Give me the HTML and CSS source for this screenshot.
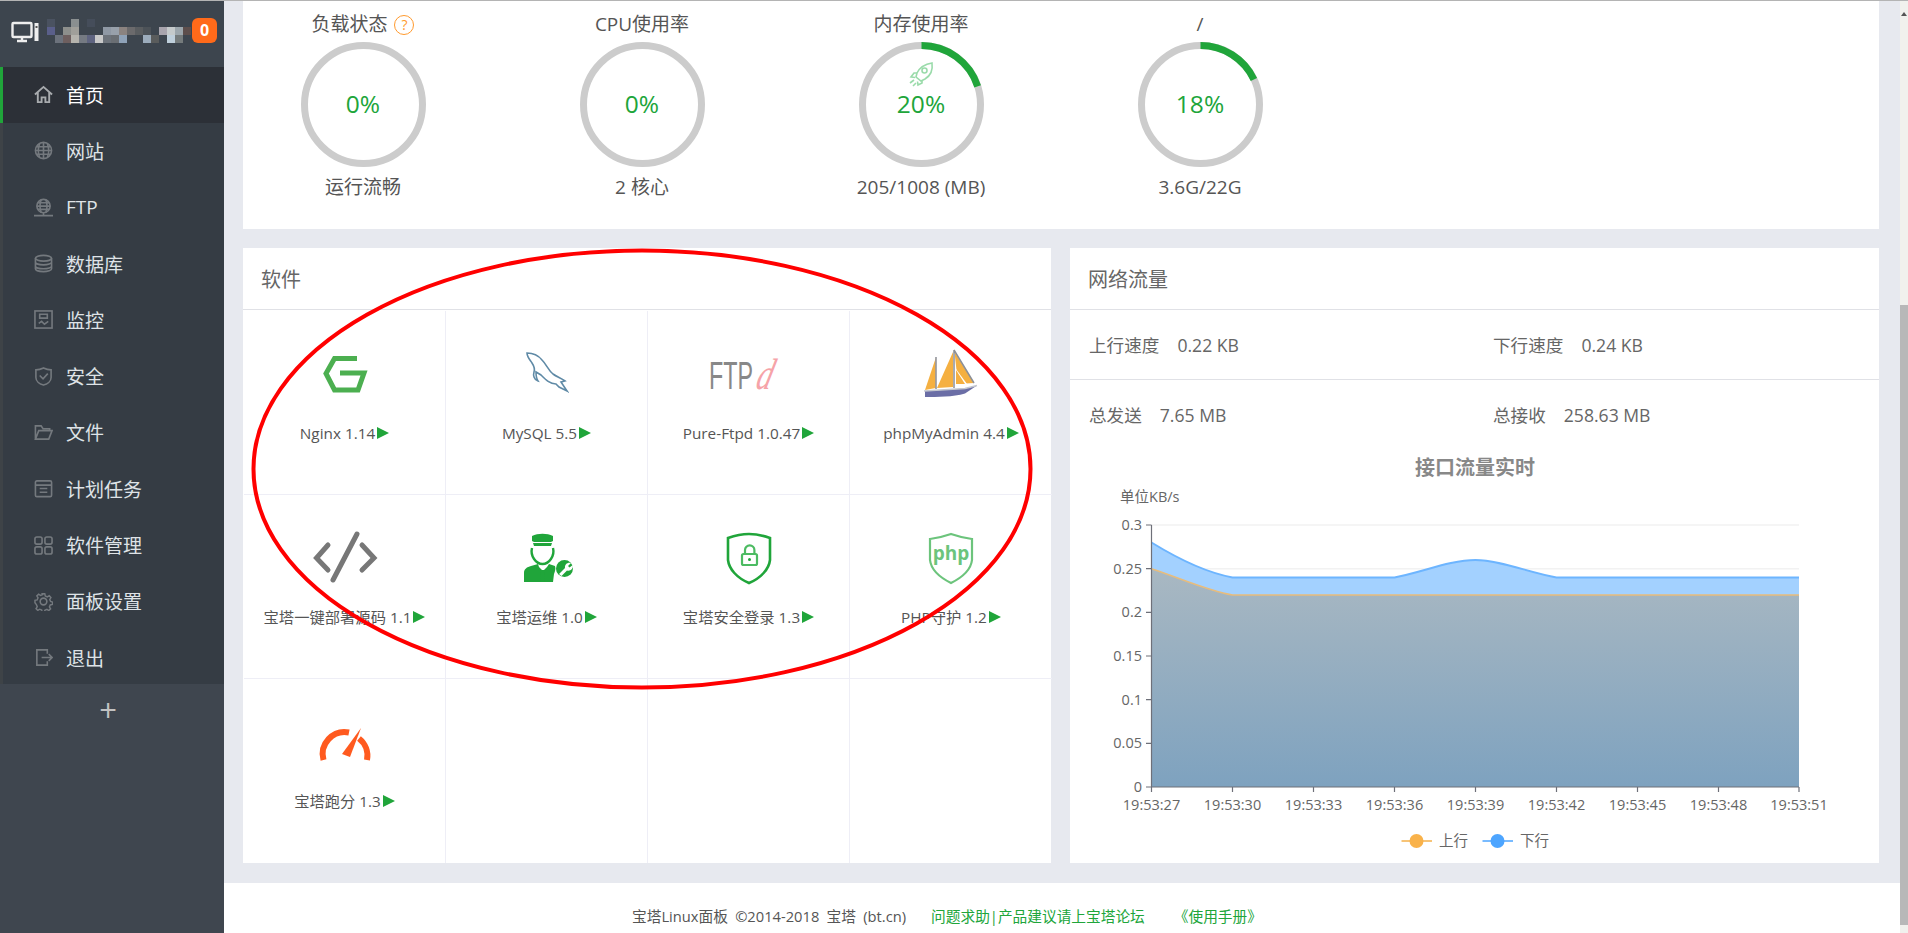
FILE: index.html
```html
<!DOCTYPE html>
<html lang="zh-CN">
<head>
<meta charset="utf-8">
<title>宝塔Linux面板</title>
<link rel="stylesheet" href="styles.css">
</head>
<body>
<div class="page">
  <aside class="sidebar">
    <div class="brand">
      <svg class="brand-icon" viewBox="0 0 30 24" width="30" height="24">
        <rect x="1.500" y="3" width="19" height="14" rx="1" fill="none" stroke="#eee" stroke-width="2.400"/>
        <path d="M6 21h10M11 17v4" stroke="#eee" stroke-width="2.400"/>
        <rect x="23.500" y="3" width="4" height="18" fill="#eee"/>
        <rect x="24.500" y="6" width="2" height="2" fill="#555"/>
      </svg>
      <svg class="mosaic" viewBox="47 17 144 24" width="144" height="24">
        <rect x="47" y="17" width="8" height="8" fill="#4a5260"/><rect x="71" y="17" width="8" height="8" fill="#8a8f90"/><rect x="87" y="17" width="8" height="8" fill="#454d5a"/>
        <rect x="47" y="25" width="8" height="8" fill="#5a5f8a"/><rect x="63" y="25" width="8" height="8" fill="#8d8f8c"/><rect x="71" y="25" width="8" height="8" fill="#a09f9a"/><rect x="103" y="25" width="8" height="8" fill="#8f98a4"/><rect x="111" y="25" width="8" height="8" fill="#98a0aa"/><rect x="119" y="25" width="8" height="8" fill="#8b8380"/><rect x="127" y="25" width="8" height="8" fill="#6b6a6c"/><rect x="135" y="25" width="8" height="8" fill="#5a5d60"/><rect x="143" y="25" width="8" height="8" fill="#4c5258"/><rect x="159" y="25" width="8" height="8" fill="#a8a4ad"/><rect x="167" y="25" width="8" height="8" fill="#c5cacb"/><rect x="175" y="25" width="8" height="8" fill="#9ca6ac"/><rect x="183" y="25" width="8" height="8" fill="#5d4e4c"/>
        <rect x="55" y="33" width="8" height="8" fill="#6c727c"/><rect x="63" y="33" width="8" height="8" fill="#6e5f5f"/><rect x="71" y="33" width="8" height="8" fill="#b5b3ad"/><rect x="79" y="33" width="8" height="8" fill="#757a82"/><rect x="87" y="33" width="8" height="8" fill="#5f6480"/><rect x="95" y="33" width="8" height="8" fill="#c9c9c9"/><rect x="103" y="33" width="8" height="8" fill="#6d737b"/><rect x="111" y="33" width="8" height="8" fill="#6a6e73"/><rect x="119" y="33" width="8" height="8" fill="#8fa2b8"/><rect x="143" y="33" width="8" height="8" fill="#9cacbc"/><rect x="151" y="33" width="8" height="8" fill="#5a5c5c"/><rect x="167" y="33" width="8" height="8" fill="#bfcfdb"/><rect x="175" y="33" width="8" height="8" fill="#757b7c"/>
      </svg>
      <span class="badge">0</span>
    </div>
    <nav class="menu">
      <a class="menu-item active"><svg class="mi" viewBox="0 0 20 20"><path d="M1 10 10 2l9 8M4 8v10h4v-5h4v5h4V8"/></svg>首页</a>
      <a class="menu-item"><svg class="mi" viewBox="0 0 20 20"><circle cx="10" cy="10" r="8.500"/><path d="M1.500 10h17M3 6h14M3 14h14M10 1.500v17M6 2.500c-2 5-2 10 0 15M14 2.500c2 5 2 10 0 15"/></svg>网站</a>
      <a class="menu-item"><svg class="mi" viewBox="0 0 20 20"><circle cx="10" cy="8.500" r="7"/><path d="M3 8.500h14M4 12h12M4 5h12M7.500 1.800c-1.500 4-1.500 9 0 13.400M12.500 1.800c1.500 4 1.500 9 0 13.400M10 15.500V18M0 18.500h20"/></svg>FTP</a>
      <a class="menu-item"><svg class="mi" viewBox="0 0 20 20"><ellipse cx="10" cy="4.500" rx="8.500" ry="3"/><path d="M1.500 4.500v11c0 1.700 3.800 3 8.500 3s8.500-1.300 8.500-3v-11M1.500 8.500c0 1.700 3.800 3 8.500 3s8.500-1.300 8.500-3M1.500 12.500c0 1.700 3.800 3 8.500 3s8.500-1.300 8.500-3"/></svg>数据库</a>
      <a class="menu-item"><svg class="mi" viewBox="0 0 20 20"><rect x="1" y="1" width="18" height="18"/><path d="M6 4.500h8v4H6zM5 14l3-2 3 3 4-3"/></svg>监控</a>
      <a class="menu-item"><svg class="mi" viewBox="0 0 20 20"><path d="M10 1c3 1.500 5 2 8 2v8c0 4-4 7-8 8-4-1-8-4-8-8V3c3 0 5-.5 8-2zM6 9l3.500 3.500L14.500 7"/></svg>安全</a>
      <a class="menu-item"><svg class="mi" viewBox="0 0 20 20"><path d="M1.500 17V3h6l2 3h7v2M1.500 17h14l3.500-9H5z"/></svg>文件</a>
      <a class="menu-item"><svg class="mi" viewBox="0 0 20 20"><rect x="1.500" y="2" width="17" height="16.500" rx="1.500"/><path d="M1.500 6.500h17M6 10h8M6 14h8"/></svg>计划任务</a>
      <a class="menu-item"><svg class="mi" viewBox="0 0 20 20"><rect x="1" y="1" width="7.500" height="7.500" rx="2"/><rect x="11.500" y="1" width="7.500" height="7.500" rx="2"/><rect x="1" y="11.500" width="7.500" height="7.500" rx="2"/><rect x="11.500" y="11.500" width="7.500" height="7.500" rx="2"/></svg>软件管理</a>
      <a class="menu-item"><svg class="mi" viewBox="0 0 20 20"><path d="M8.500 1h3l.6 2.600 2.300 1 2.300-1.400 2 2.200-1.400 2.200 1 2.400 2.200.6v2.800l-2.600.6-1 2.300 1.400 2.300-2.100 2-2.200-1.400-2.400 1-.6 2.400H8.500l-.6-2.600-2.300-1-2.300 1.400-2-2.100 1.400-2.200-1-2.400L0 11.500V8.700l2.600-.6 1-2.300-1.400-2.300 2.100-2 2.200 1.400 2.400-1z" transform="translate(1 1) scale(.9)"/><circle cx="10" cy="10" r="3.500"/></svg>面板设置</a>
      <a class="menu-item"><svg class="mi" viewBox="0 0 20 20"><path d="M14 6V2H3v16h11v-4M8 10h11M15.500 6.500 19 10l-3.500 3.500"/></svg>退出</a>
    </nav>
    <div class="plus">+</div>
  </aside>

  <main class="main">
    <section class="card status">
      <div class="gauge">
        <div class="gauge-title">负载状态 <span class="help">?</span></div>
        <div class="ring">
          <svg viewBox="0 0 125 125" width="125" height="125"><circle class="track" cx="62.500" cy="62.500" r="59"/></svg>
          <span class="pct">0%</span>
        </div>
        <div class="gauge-sub">运行流畅</div>
      </div>
      <div class="gauge">
        <div class="gauge-title">CPU使用率</div>
        <div class="ring">
          <svg viewBox="0 0 125 125" width="125" height="125"><circle class="track" cx="62.500" cy="62.500" r="59"/></svg>
          <span class="pct">0%</span>
        </div>
        <div class="gauge-sub">2 核心</div>
      </div>
      <div class="gauge">
        <div class="gauge-title">内存使用率</div>
        <div class="ring">
          <svg viewBox="0 0 125 125" width="125" height="125">
            <circle class="track" cx="62.500" cy="62.500" r="59"/>
            <circle class="arc" cx="62.500" cy="62.500" r="59" pathLength="100" stroke-dasharray="20 80" transform="rotate(-90 62.500 62.500)"/>
            <g class="rocket"><path d="M73 21c-7 1-12 4-15 10l-1 4 5 4 4-2c5-3 8-9 7-16z"/><circle cx="65.500" cy="28.500" r="2.500"/><path d="M58 31h-3l-3 4 4 .5M63 38v3l-4 2-.5-3.500M51 41l4-3M54 44l3-3"/></g>
          </svg>
          <span class="pct">20%</span>
        </div>
        <div class="gauge-sub">205/1008 (MB)</div>
      </div>
      <div class="gauge">
        <div class="gauge-title">/</div>
        <div class="ring">
          <svg viewBox="0 0 125 125" width="125" height="125">
            <circle class="track" cx="62.500" cy="62.500" r="59"/>
            <circle class="arc" cx="62.500" cy="62.500" r="59" pathLength="100" stroke-dasharray="18 82" transform="rotate(-90 62.500 62.500)"/>
          </svg>
          <span class="pct">18%</span>
        </div>
        <div class="gauge-sub">3.6G/22G</div>
      </div>
    </section>

    <div class="columns">
      <section class="card software">
        <h2 class="card-title">软件</h2>
        <div class="soft-grid">
          <div class="soft-cell">
            <svg class="soft-icon" viewBox="0 0 60 60"><path d="M42 15.500H19.500L11 30.500 19.500 47H43l6-17H25" fill="none" stroke="#4caf50" stroke-width="5"/></svg>
            <div class="soft-name">Nginx 1.14<i class="play"></i></div>
          </div>
          <div class="soft-cell">
            <svg class="soft-icon" viewBox="0 0 60 60"><path d="M10 10c5 0 11 2 15 7 5 5 6 10 11 14 4 3 8 4 12 7l-4 1 6 9-8-4-3-3c-6 0-10-4-15-9l-5-3c0 3 0 6 2 9-4-1-5-6-4-9 1-3 0-6-2-9-2-3-5-6-5-10z" fill="none" stroke="#5f8aa6" stroke-width="1.600"/></svg>
            <div class="soft-name">MySQL 5.5<i class="play"></i></div>
          </div>
          <div class="soft-cell">
            <svg class="soft-icon wide" viewBox="0 0 80 60"><text class="ftp-t" x="3" y="46" textLength="44" lengthAdjust="spacingAndGlyphs">FTP</text><text class="ftp-d" transform="translate(48.500 46) skewX(-15) scale(.7 1)">d</text></svg>
            <div class="soft-name">Pure-Ftpd 1.0.47<i class="play"></i></div>
          </div>
          <div class="soft-cell">
            <svg class="soft-icon" viewBox="0 0 60 60">
              <path fill="#f5b041" d="M14.700 15 4 47l10.700-2zM32 9 16 45l16-1zM33.500 9 53 40l-16 1z"/>
              <path fill="#fff" d="M35 26 46 41H35z"/><path fill="#f5b041" d="M35 27l9 14h-9z"/>
              <path stroke="#8c8f96" stroke-width="1.500" fill="none" d="M15 14v32M33 7v38M33 7l20 33"/>
              <path fill="#6b6ea6" d="M4 48l40-2.500 12-3-12 8C32 54 16 54 4 54z"/>
              <path stroke="#c5c8cf" stroke-width="1.600" fill="none" d="M3 48l41-2.500 12-3"/>
            </svg>
            <div class="soft-name">phpMyAdmin 4.4<i class="play"></i></div>
          </div>
          <div class="soft-cell">
            <svg class="soft-icon" viewBox="0 0 60 60"><path d="M13 18 1.500 31 13 43M47 18 59 31 47 43M42 7 18 53" fill="none" stroke="#777" stroke-width="5" stroke-linecap="round" stroke-linejoin="miter"/></svg>
            <div class="soft-name">宝塔一键部署源码 1.1<i class="play"></i></div>
          </div>
          <div class="soft-cell">
            <svg class="soft-icon" viewBox="0 0 60 60">
              <g fill="#20a53a">
                <path d="M15 9c6-3 15-3 21 0v5l-2 1H17l-2-1zM16 16h19l-1 3H17z"/>
                <path d="M7 55V46c0-4 3-6 7-7l7-2 1 3 3 3 1 3-1 9zM27 55l-1-9 1-3 3-3 2-3 6 2c1 3 0 5-1 8l-1 8z"/>
                <path d="M23 43h5l-1 3 1 9h-5l1-9z"/>
                <circle cx="47.500" cy="41.500" r="8.500"/>
              </g>
              <path d="M15 21c-2 8 4 16 10.500 16S38 29 36 21" fill="none" stroke="#20a53a" stroke-width="2.400"/>
              <path d="M42 47l6-6c-.5-3.500 2.500-6 6-5l-3 3 1.500 1.500 3.300-2.500c.7 3.500-2.300 6.500-5.800 5.500l-5.500 5.500z" fill="#fff"/>
            </svg>
            <div class="soft-name">宝塔运维 1.0<i class="play"></i></div>
          </div>
          <div class="soft-cell">
            <svg class="soft-icon" viewBox="0 0 60 60">
              <path d="M30 7c-7 0-14 1.500-21 4v22c1 9 9 18 21 23 12-5 20-14 21-23V11c-7-2.500-14-4-21-4z" fill="none" stroke="#20a53a" stroke-width="2.600"/>
              <path d="M26 27v-4a4.700 4.700 0 0 1 9.400 0v4" fill="none" stroke="#4cbb62" stroke-width="2.200"/>
              <rect x="23" y="27" width="15" height="11" rx="1.500" fill="none" stroke="#4cbb62" stroke-width="2.200"/>
              <circle cx="30.500" cy="32.500" r="1.500" fill="#20a53a"/>
            </svg>
            <div class="soft-name">宝塔安全登录 1.3<i class="play"></i></div>
          </div>
          <div class="soft-cell">
            <svg class="soft-icon" viewBox="0 0 60 60">
              <path d="M30 7c-7 2.500-14 4-21 5v21c1 9 9 17 21 23 12-6 20-14 21-23V12c-7-1-14-2.500-21-5z" fill="none" stroke="#6cc47c" stroke-width="2.200"/>
              <text class="php-t" x="30" y="33">php</text>
            </svg>
            <div class="soft-name">PHP守护 1.2<i class="play"></i></div>
          </div>
          <div class="soft-cell">
            <svg class="soft-icon" viewBox="0 0 60 60">
              <path d="M8.500 49A22 22 0 0 1 34 21.500M44 27.500A22 22 0 0 1 52 49" fill="none" stroke="#ff5a1f" stroke-width="6"/>
              <path d="M46 17 35 46l-8-3z" fill="#ff5a1f"/>
            </svg>
            <div class="soft-name">宝塔跑分 1.3<i class="play"></i></div>
          </div>
          <div class="soft-cell"></div>
          <div class="soft-cell"></div>
          <div class="soft-cell"></div>
        </div>
      </section>

      <section class="card network">
        <h2 class="card-title">网络流量</h2>
        <div class="net-row">
          <div class="net-col"><span class="net-label">上行速度</span><span>0.22 KB</span></div>
          <div class="net-col"><span class="net-label">下行速度</span><span>0.24 KB</span></div>
        </div>
        <div class="net-row plain">
          <div class="net-col"><span class="net-label">总发送</span><span>7.65 MB</span></div>
          <div class="net-col"><span class="net-label">总接收</span><span>258.63 MB</span></div>
        </div>
        <svg class="chart" viewBox="1070 448 809 414" width="809" height="414">
          <defs>
            <linearGradient id="up" x1="0" y1="0" x2="0" y2="1"><stop offset="0" stop-color="#a9b8c2"/><stop offset="1" stop-color="#7ea2bf"/></linearGradient>
          </defs>
          <text class="c-title" x="1475" y="476">接口流量实时</text>
          <text class="c-lab" x="1120" y="503">单位KB/s</text>
          <g class="c-grid">
            <path d="M1151.500 526H1799M1151.500 569.700H1799"/>
          </g>
          <path fill="#a3d1ff" d="M1151.500 543.500C1180 561 1208 574 1232.500 578.400H1394.500C1420 574 1450 561 1475.500 561C1500 561 1530 574 1556.500 578.400H1799V788H1151.500Z"/>
          <path fill="none" stroke="#6db5ff" stroke-width="2" d="M1151.500 543.500C1180 561 1208 574 1232.500 578.400H1394.500C1420 574 1450 561 1475.500 561C1500 561 1530 574 1556.500 578.400H1799"/>
          <path fill="url(#up)" d="M1151.500 569.700C1180 579 1208 592 1232.500 595.900H1799V788H1151.500Z"/>
          <path fill="none" stroke="#e8bc7c" stroke-width="1.500" d="M1151.500 569.700C1180 579 1208 592 1232.500 595.900H1799"/>
          <path class="c-axis" d="M1151.500 526V788H1799M1146 526h5.500M1146 569.700h5.500M1146 613.300h5.500M1146 657h5.500M1146 700.700h5.500M1146 744.300h5.500M1146 788h5.500M1151.500 788v5M1232.500 788v5M1313.500 788v5M1394.500 788v5M1475.500 788v5M1556.500 788v5M1637.500 788v5M1718.500 788v5M1799 788v5"/>
          <g class="c-y">
            <text x="1142" y="531">0.3</text><text x="1142" y="574.700">0.25</text><text x="1142" y="618.300">0.2</text><text x="1142" y="662">0.15</text><text x="1142" y="705.700">0.1</text><text x="1142" y="749.300">0.05</text><text x="1142" y="793">0</text>
          </g>
          <g class="c-x">
            <text x="1151.500" y="811">19:53:27</text><text x="1232.500" y="811">19:53:30</text><text x="1313.500" y="811">19:53:33</text><text x="1394.500" y="811">19:53:36</text><text x="1475.500" y="811">19:53:39</text><text x="1556.500" y="811">19:53:42</text><text x="1637.500" y="811">19:53:45</text><text x="1718.500" y="811">19:53:48</text><text x="1799" y="811">19:53:51</text>
          </g>
          <path d="M1401.500 842h30.500" stroke="#f5b04a" stroke-width="1.500"/>
          <circle cx="1416.500" cy="842" r="7" fill="#f9b24a"/>
          <text class="c-lab" x="1439" y="847">上行</text>
          <path d="M1482.500 842H1513" stroke="#4da5ff" stroke-width="1.500"/>
          <circle cx="1497.500" cy="842" r="7" fill="#4da5ff"/>
          <text class="c-lab" x="1520" y="847">下行</text>
        </svg>
      </section>
    </div>

    <footer class="footer">
      <span class="foot-copy">宝塔Linux面板 ©2014-2018 宝塔 (bt.cn)</span>
      <a class="foot-link">问题求助|产品建议请上宝塔论坛</a>
      <a class="foot-link">《使用手册》</a>
    </footer>

    <svg class="annotation" viewBox="0 0 800 450" width="800" height="450"><ellipse cx="400" cy="225" rx="388.500" ry="218.500"/></svg>
  </main>

  <div class="scrollbar"><span class="scroll-up"></span><div class="thumb"></div></div>
</div>
</body>
</html>
```
FILE: styles.css
```css
* { box-sizing: border-box; }
html, body { margin: 0; height: 100%; overflow: hidden; }
body {
  font-family: "Open Sans", "Noto Sans CJK SC", sans-serif;
  color: #555;
  background: #e7e9ef;
}
.page {
  display: flex;
  width: 1908px;
  height: 933px;
  border-top: 1px solid #b4b4b4;
}

/* sidebar */
.sidebar {
  width: 224px;
  flex: none;
  background: #3f464f;
  display: flex;
  flex-direction: column;
}
.brand {
  height: 66px;
  flex: none;
  background: #3d454e;
  display: flex;
  align-items: center;
  padding-left: 11px;
}
.brand-icon { flex: none; margin-top: -4px; }
.mosaic { flex: none; margin-left: 6px; margin-top: -7px; }
.badge {
  width: 25px;
  height: 25px;
  flex: none;
  margin: -7px 0 0 1px;
  border-radius: 6px;
  background: #ff6a1a;
  color: #fff;
  font: 700 16px/25px "Open Sans", sans-serif;
  text-align: center;
}
.menu { height: 617px; flex: none; overflow: hidden; background: #353c44; }
.menu-item {
  height: 56.3px;
  display: flex;
  align-items: center;
  gap: 13px;
  padding: 0 0 1px 31px;
  border-left: 3px solid #3e4347;
  color: #dfe3e7;
  font-size: 19px;
}
.menu-item.active {
  background: #2c3037;
  border-left-color: #20a53a;
  color: #fff;
}
.mi {
  width: 19px;
  height: 19px;
  flex: none;
  fill: none;
  stroke: #74797e;
  stroke-width: 1.700;
}
.active .mi { stroke: #a8abae; stroke-width: 2; }
.plus {
  padding-right: 8px;
  text-align: center;
  color: #c2c2c2;
  font: 400 31px/52px "Open Sans", sans-serif;
}

/* main column */
.main {
  position: relative;
  width: 1676px;
  flex: none;
  display: flex;
  flex-direction: column;
  padding: 0 21px 0 19px;
}
.card { background: #fff; }
.status {
  height: 228px;
  flex: none;
  display: flex;
  gap: 79px;
  padding: 6px 0 0 20px;
}
.gauge { width: 200px; text-align: center; font-size: 19px; color: #555; }
.gauge-title { height: 35px; line-height: 34px; white-space: nowrap; }
.help {
  display: inline-block;
  width: 20px;
  height: 20px;
  margin-left: 2px;
  border: 1.500px solid #ff9a2e;
  border-radius: 50%;
  color: #ff9a2e;
  font-size: 14px;
  line-height: 17px;
  vertical-align: 1px;
}
.ring { display: grid; place-items: center; height: 125px; }
.ring > * { grid-area: 1 / 1; }
.track { fill: none; stroke: #ccc; stroke-width: 7; }
.arc { fill: none; stroke: #20a53a; stroke-width: 7; }
.rocket { fill: none; stroke: #9adbaa; stroke-width: 1.600; }
.pct { color: #20a53a; font-size: 24.500px; margin-top: -2px; }
.gauge-sub { line-height: 34px; margin-top: 3px; }

.columns {
  display: grid;
  grid-template-columns: 808px 809px;
  gap: 19px;
  height: 615px;
  flex: none;
  margin-top: 19px;
}
.card-title {
  margin: 0;
  height: 62px;
  padding-left: 18px;
  font-size: 20px;
  font-weight: 400;
  line-height: 64px;
  color: #666;
  border-bottom: 1.500px solid #e0e1e6;
}
.soft-grid {
  display: grid;
  grid-template-columns: repeat(4, 202px);
  grid-auto-rows: 184px;
  margin: 1px 0 0 1px;
}
.soft-cell {
  display: flex;
  flex-direction: column;
  align-items: center;
  padding-top: 32px;
  border-right: 1px solid #eeeef6;
  border-bottom: 1px solid #eeeef6;
}
.soft-cell:nth-child(4n) { border-right: 0; }
.soft-cell:nth-child(n+9) { border-bottom: 0; }
.soft-icon { width: 60px; height: 60px; flex: none; overflow: visible; }
.soft-icon.wide { width: 80px; margin-left: -6px; }
.soft-name {
  margin-top: 20px;
  display: flex;
  align-items: center;
  font-size: 15.300px;
  line-height: 20px;
  color: #555;
  white-space: nowrap;
}
.play {
  width: 0;
  height: 0;
  margin-left: 2px;
  border-left: 12px solid #20a53a;
  border-top: 6.500px solid transparent;
  border-bottom: 6.500px solid transparent;
}
.ftp-t { font: 400 39px "Liberation Sans", sans-serif; fill: #888; }
.ftp-d { font: italic 400 44px "Liberation Serif", serif; fill: #f6a3a8; }
.php-t { font: 700 19px "Open Sans", sans-serif; fill: #6cc47c; text-anchor: middle; }

.network { display: flex; flex-direction: column; }
.net-row {
  height: 70px;
  flex: none;
  display: grid;
  grid-template-columns: 404px 1fr;
  align-items: center;
  padding-left: 19px;
  font-size: 17.600px;
  color: #666;
  border-bottom: 1.500px solid #e0e1e6;
}
.net-row.plain { height: 69px; border-bottom: 0; }
.net-label { margin-right: 18px; }
.chart { display: block; flex: none; margin-top: -2px; }
.c-title { font: 700 20px "Noto Sans CJK SC", serif; fill: #888; text-anchor: middle; }
.c-lab { font: 14.500px "Open Sans", "Noto Sans CJK SC", sans-serif; fill: #666; }
.c-grid { fill: none; stroke: #f2f2f2; stroke-width: 1.500; }
.c-axis { fill: none; stroke: #6e7079; stroke-width: 1.200; }
.c-y text { font: 14.500px "Open Sans", sans-serif; fill: #666; text-anchor: end; }
.c-x text { font: 14.500px "Open Sans", sans-serif; fill: #666; text-anchor: middle; }

.footer {
  flex: none;
  height: 50px;
  margin: 20px -21px 0 -19px;
  background: #fff;
  display: flex;
  align-items: center;
  gap: 25px;
  padding: 14px 0 0 408px;
  font-size: 14.700px;
  color: #555;
}
.foot-copy { word-spacing: 3.500px; }
.foot-link { color: #20a53a; }
.foot-link:last-child { margin-left: 4px; }

/* hand-drawn red ring laid over the software card */
.annotation { position: absolute; left: 18px; top: 243px; pointer-events: none; }
.annotation ellipse { fill: none; stroke: #f00; stroke-width: 4; }

.scrollbar {
  width: 8px;
  flex: none;
  background: #f1f1ed;
  display: flex;
  flex-direction: column;
  justify-content: flex-end;
  position: relative;
}
.thumb { height: 620px; margin-bottom: 8px; background: #b8b8b8; }
.scroll-up {
  position: absolute;
  top: 11px;
  left: 1px;
  border-left: 3px solid transparent;
  border-right: 3px solid transparent;
  border-bottom: 4px solid #555;
}
```
